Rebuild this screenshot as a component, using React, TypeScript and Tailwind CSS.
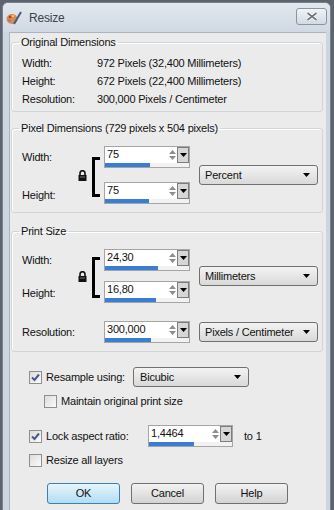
import React from 'react';
import { clsx, type ClassValue } from 'clsx';
import { twMerge } from 'tailwind-merge';

function cn(...inputs: ClassValue[]) {
  return twMerge(clsx(inputs));
}

const DownArrow = ({ color = '#000' }: { color?: string }) => (
  <svg width="7" height="4" viewBox="0 0 7 4">
    <path d="M0 0h7L3.5 4z" fill={color} />
  </svg>
);

const Dropdown = ({ label, className }: { label: string; className?: string }) => (
  <div
    className={cn(
      'flex h-[20px] items-center justify-between rounded-[3px] border border-[#707070] bg-linear-to-b from-[#f3f3f3] to-[#d9d9d9] pl-[5px] pr-[7px]',
      className
    )}
  >
    <span>{label}</span>
    <DownArrow />
  </div>
);

interface SpinBoxProps {
  value: string;
  fill: number;
  className?: string;
}

const SpinBox: React.FC<SpinBoxProps> = ({ value, fill, className }) => (
  <div className={cn('flex h-[22px] w-[86px] flex-col border border-[#a5a5a5] bg-white', className)}>
    <div className="flex h-[17px]">
      <span className="flex-1 pl-[2px] leading-[14px]">{value}</span>
      <div className="flex w-[9px] flex-col items-center justify-center gap-[2px]">
        <svg width="7" height="4" viewBox="0 0 7 4">
          <path d="M3.5 0L7 4H0z" fill="#8d8d8d" />
        </svg>
        <svg width="7" height="4" viewBox="0 0 7 4">
          <path d="M0 0h7L3.5 4z" fill="#8d8d8d" />
        </svg>
      </div>
      <div className="flex w-[12px] items-center justify-center border border-[#7d7d7d] bg-[#d6d6d6]">
        <DownArrow />
      </div>
    </div>
    <div className="mt-auto flex h-[4px] bg-[#f2f2f2]">
      <div className="h-full bg-[#3a7dd6]" style={{ width: `${fill}px` }} />
    </div>
  </div>
);

const Checkbox = ({ checked }: { checked?: boolean }) => (
  <div className="flex h-[13px] w-[13px] shrink-0 items-center justify-center border border-[#8e8f8f] bg-linear-to-br from-[#dcdcdc] to-[#fbfbfb]">
    {checked && (
      <svg width="9" height="9" viewBox="0 0 9 9">
        <path d="M1 4.5L3.5 7L8 1.5" fill="none" stroke="#485a8a" strokeWidth="2" />
      </svg>
    )}
  </div>
);

const Lock = () => (
  <svg width="9" height="11" viewBox="0 0 9 11" className="shrink-0">
    <path d="M2 5V3.2a2.5 2.5 0 0 1 5 0V5" fill="none" stroke="#111" strokeWidth="1.6" />
    <rect x="0.5" y="5" width="8" height="6" fill="#111" />
    <rect x="2" y="6.5" width="5" height="1" fill="#777" />
  </svg>
);

const Bracket = ({ height }: { height: number }) => (
  <div className="w-[8px] shrink-0 border-y-[3px] border-l-[3px] border-black" style={{ height }} />
);

const Group = ({ title, className, children }: { title: string; className?: string; children: React.ReactNode }) => (
  <fieldset className={cn('rounded-[3px] border border-[#d0d5d9] shadow-[inset_1px_1px_0_#fff]', className)}>
    <legend className="ml-[7px] px-[2px] leading-[13px]">{title}</legend>
    {children}
  </fieldset>
);

const Button = ({ label, primary }: { label: string; primary?: boolean }) => (
  <div
    className={cn(
      'flex h-[21px] w-[73px] items-center justify-center rounded-[3px] border',
      primary
        ? 'border-[#3c7fb1] bg-linear-to-b from-[#e6f5fd] to-[#b2dcf3]'
        : 'border-[#707070] bg-linear-to-b from-[#f3f3f3] to-[#d3d3d3]'
    )}
  >
    {label}
  </div>
);

export default function App() {
  return (
    <div className="h-[510px] w-[334px] overflow-hidden bg-[#5d646d] pt-[2px] font-['Liberation_Sans',Arial,sans-serif] text-[11px] tracking-[-0.2px] text-[#111]">
      <div className="ml-[2px] flex h-[520px] w-[329px] flex-col rounded-t-[6px] border border-[#77828e] bg-[#cdd6e0]">
        {/* title bar */}
        <div className="flex h-[29px] shrink-0 items-center rounded-t-[5px] bg-linear-to-b from-[#e2e8ef] to-[#d0d9e3] pl-[3px]">
          <svg width="16" height="16" viewBox="0 0 16 16">
            <ellipse cx="6" cy="9" rx="5.5" ry="5" fill="#d98a4c" />
            <circle cx="4" cy="7" r="1.2" fill="#b8342a" />
            <circle cx="7" cy="6" r="1.1" fill="#f1d36a" />
            <circle cx="3.5" cy="10.5" r="1.1" fill="#5a7fc0" />
            <path d="M8 14L15 2" stroke="#4e5a78" strokeWidth="2" />
          </svg>
          <span className="ml-[7px] text-[12px] text-[#3c434b]">Resize</span>
          <div className="ml-auto mr-[3px] mt-[-2px] flex h-[17px] w-[31px] items-center justify-center rounded-[3px] border border-[#8a95a2] bg-linear-to-b from-[#f1f4f7] to-[#d3dae2]">
            <svg width="12" height="9" viewBox="0 0 12 9">
              <path d="M1.5 1l9 7M10.5 1l-9 7" stroke="#fff" strokeWidth="3.4" />
              <path d="M1.5 1l9 7M10.5 1l-9 7" stroke="#6b7683" strokeWidth="1.6" />
            </svg>
          </div>
        </div>

        {/* body */}
        <div className="ml-[6px] mr-[4px] flex flex-1 flex-col border-l border-t border-[#a9b4bf] bg-[#ebebeb] pl-[1px] pr-[3px]">
          <Group title="Original Dimensions" className="mt-[3px]">
            <div className="pb-[3px] pl-[10px] pt-[5px]">
              {[
                ['Width:', '972 Pixels (32,400 Millimeters)'],
                ['Height:', '672 Pixels (22,400 Millimeters)'],
                ['Resolution:', '300,000 Pixels / Centimeter'],
              ].map(([k, v]) => (
                <div key={k} className="flex h-[18px] items-center">
                  <span className="w-[75px]">{k}</span>
                  <span>{v}</span>
                </div>
              ))}
            </div>
          </Group>

          <Group title="Pixel Dimensions (729 pixels x 504 pixels)" className="mt-[10px]">
            <div className="flex items-center pb-[8px] pl-[10px] pt-[11px]">
              <div className="flex w-[56px] flex-col gap-[14px]">
                <div className="flex h-[22px] items-center">Width:</div>
                <div className="flex h-[22px] items-center pt-[4px]">Height:</div>
              </div>
              <Lock />
              <div className="ml-[5px] mt-[3px]">
                <Bracket height={40} />
              </div>
              <div className="ml-[4px] flex flex-col gap-[14px]">
                <SpinBox value="75" fill={45} />
                <SpinBox value="75" fill={44} />
              </div>
              <Dropdown label="Percent" className="ml-[9px] w-[119px]" />
            </div>
          </Group>

          <Group title="Print Size" className="mt-[12px]">
            <div className="pb-[8px] pl-[10px] pt-[11px]">
              <div className="flex items-center">
                <div className="flex w-[56px] flex-col gap-[10px]">
                  <div className="flex h-[22px] items-center">Width:</div>
                  <div className="flex h-[22px] items-center pt-[3px]">Height:</div>
                </div>
                <Lock />
                <div className="ml-[5px] mt-[2px]">
                  <Bracket height={41} />
                </div>
                <div className="ml-[4px] flex flex-col gap-[10px]">
                  <SpinBox value="24,30" fill={53} />
                  <SpinBox value="16,80" fill={51} />
                </div>
                <Dropdown label="Millimeters" className="ml-[9px] w-[119px]" />
              </div>
              <div className="mt-[18px] flex items-center">
                <span className="w-[82px]">Resolution:</span>
                <SpinBox value="300,000" fill={46} />
                <Dropdown label="Pixels / Centimeter" className="ml-[9px] w-[119px]" />
              </div>
            </div>
          </Group>

          <div className="flex flex-col pl-[18px]">
            <div className="mt-[15px] flex h-[20px] items-center">
              <Checkbox checked />
              <span className="ml-[4px] w-[87px]">Resample using:</span>
              <Dropdown label="Bicubic" className="w-[116px] pl-[6px]" />
            </div>
            <div className="ml-[15px] mt-[6px] flex h-[16px] items-center">
              <Checkbox />
              <span className="ml-[4px]">Maintain original print size</span>
            </div>
            <div className="mt-[16px] flex h-[22px] items-center">
              <Checkbox checked />
              <span className="ml-[4px] w-[102px]">Lock aspect ratio:</span>
              <SpinBox value="1,4464" fill={45} className="w-[85px]" />
              <span className="ml-[11px]">to 1</span>
            </div>
            <div className="mt-[5px] flex h-[16px] items-center">
              <Checkbox />
              <span className="ml-[4px]">Resize all layers</span>
            </div>
            <div className="ml-[18px] mt-[15px] flex gap-[11px]">
              <Button label="OK" primary />
              <Button label="Cancel" />
              <Button label="Help" />
            </div>
          </div>
        </div>
      </div>
    </div>
  );
}
